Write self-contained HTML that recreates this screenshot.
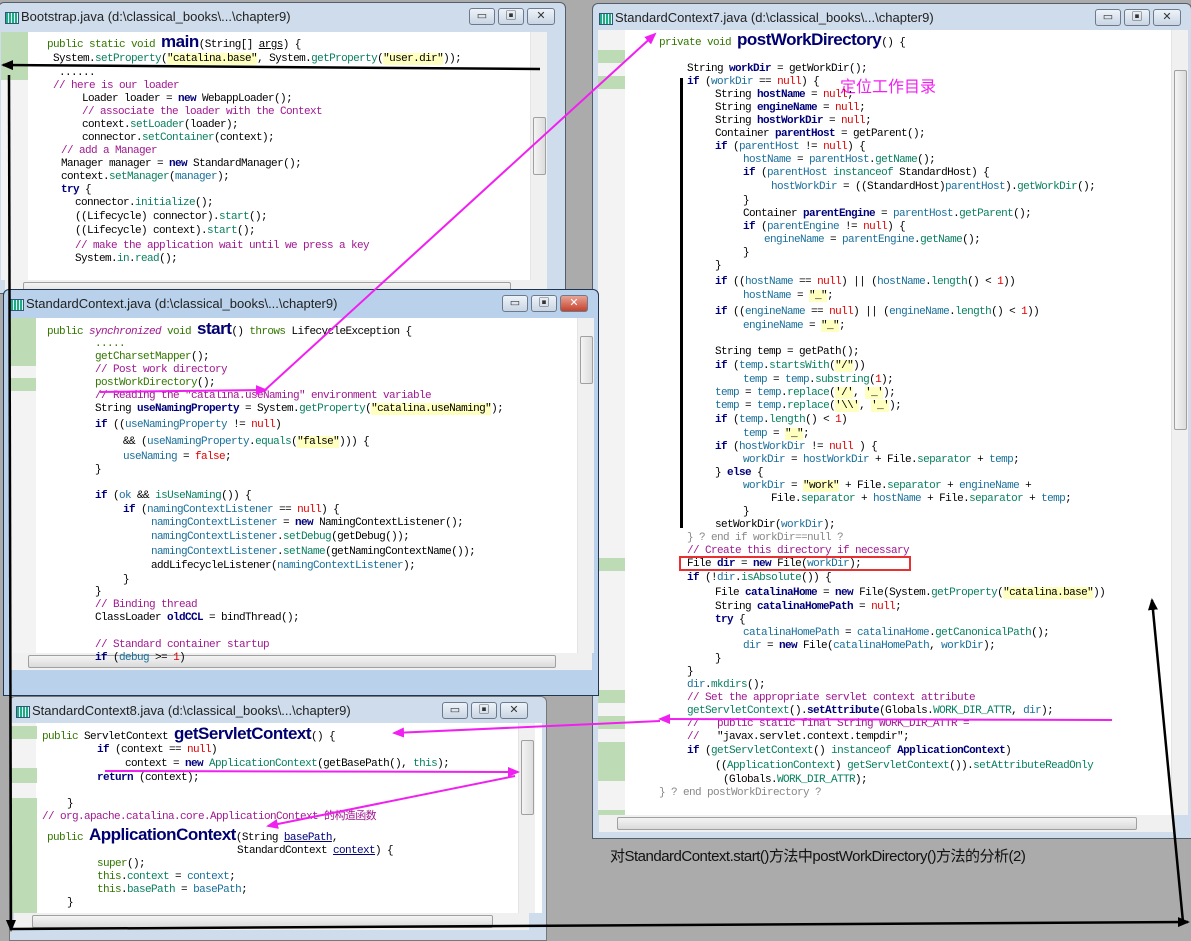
<!DOCTYPE html>
<html><head><meta charset="utf-8">
<style>
*{margin:0;padding:0;box-sizing:border-box}
body{width:1191px;height:935px;background:#ababab;position:relative;overflow:hidden;font-family:"Liberation Sans","Noto Sans CJK SC",sans-serif}
.win{position:absolute;background:#cfdcec;border:1px solid #555d6a;border-radius:6px 6px 0 0}
.title{position:absolute;left:22px;top:6px;font-size:13px;color:#222;white-space:nowrap}
.ico{position:absolute;left:6px;top:9px;width:14px;height:12px;background:repeating-linear-gradient(90deg,#2a8 0 2px,#dfe 2px 3px);border:1px solid #357}
.btns{position:absolute;top:5px;right:10px;display:flex;gap:3px}
.btns div{width:26px;height:17px;border:1px solid #6d7a8c;border-radius:3px;background:linear-gradient(#eef3f9,#c9d5e4);font-size:11px;text-align:center;line-height:15px;color:#333}
.btns .x{width:28px}
.act .btns .x{background:linear-gradient(#e8a394,#c5422c);color:#fff}
.body{position:absolute;background:#fff;overflow:hidden}
.gut{position:absolute;left:0;top:0;bottom:0;width:27px;background:#f3f3f3}
.g{position:absolute;left:0;width:27px;background:#bddcb6}
.vs{position:absolute;top:0;right:0;width:17px;bottom:0;background:#f0f0f0;border-left:1px solid #e4e4e4}
.th{position:absolute;left:2px;width:13px;background:linear-gradient(90deg,#f4f4f4,#dcdcdc);border:1px solid #a0a0a0;border-radius:2px}
.hs{position:absolute;left:0;right:0;height:17px;background:#f0f0f0}
.hs i{position:absolute;left:18px;right:36px;top:2px;height:13px;border:1px solid #a0a0a0;border-radius:2px;background:linear-gradient(#f4f4f4,#dadada)}
.l{position:absolute;white-space:pre;font-family:"Liberation Mono","Noto Sans CJK SC",monospace;font-size:11px;letter-spacing:-0.6px;line-height:13px;color:#000}
.k{color:#00007a;font-weight:bold}
.c{color:#a01890}
.m{color:#0a8060}
.n{color:#e00000}
.s{background:#ffffc0}
.p{color:#337700}
.v{color:#1a6f9a}
.big{font-size:17px;font-weight:bold;color:#000070;letter-spacing:-0.5px;font-family:"Liberation Sans",sans-serif}
</style></head><body>

<!-- Bootstrap window -->
<div class="win" style="left:-2px;top:2px;width:568px;height:292px">
 <div class="ico"></div><div class="title">Bootstrap.java (d:\classical_books\...\chapter9)</div>
 <div class="btns"><div>▭</div><div>▣</div><div class="x">✕</div></div>
 <div class="body" style="left:2px;top:29px;width:546px;height:248px">
  <div class="gut"></div><div class="g" style="top:0;height:48px"></div>
  <div class="vs"><div class="th" style="top:85px;height:58px"></div></div>
 </div>
 <div class="hs" style="top:277px;left:6px;right:18px"><i></i></div>
</div>
<div class="l" style="left:47px;top:35px"><span class="p">public static void </span><span class="big">main</span>(String[] <u>args</u>) {</div>
<div class="l" style="left:53px;top:53px">System.<span class="m">setProperty</span>(<span class="s">"catalina.base"</span>, System.<span class="m">getProperty</span>(<span class="s">"user.dir"</span>));</div>
<div class="l" style="left:53px;top:67px"> ......</div>
<div class="l" style="left:53px;top:80px"><span class="c">// here is our loader</span></div>
<div class="l" style="left:82px;top:93px">Loader loader = <span class="k">new</span> WebappLoader();</div>
<div class="l" style="left:82px;top:106px"><span class="c">// associate the loader with the Context</span></div>
<div class="l" style="left:82px;top:119px">context.<span class="m">setLoader</span>(loader);</div>
<div class="l" style="left:82px;top:132px">connector.<span class="m">setContainer</span>(context);</div>
<div class="l" style="left:61px;top:145px"><span class="c">// add a Manager</span></div>
<div class="l" style="left:61px;top:158px">Manager manager = <span class="k">new</span> StandardManager();</div>
<div class="l" style="left:61px;top:171px">context.<span class="m">setManager</span>(<span class="v">manager</span>);</div>
<div class="l" style="left:61px;top:184px"><span class="k">try</span> {</div>
<div class="l" style="left:75px;top:197px">connector.<span class="m">initialize</span>();</div>
<div class="l" style="left:75px;top:211px">((Lifecycle) connector).<span class="m">start</span>();</div>
<div class="l" style="left:75px;top:225px">((Lifecycle) context).<span class="m">start</span>();</div>
<div class="l" style="left:75px;top:240px"><span class="c">// make the application wait until we press a key</span></div>
<div class="l" style="left:75px;top:253px">System.<span class="m">in</span>.<span class="m">read</span>();</div>

<!-- StandardContext7 window -->
<div class="win" style="left:592px;top:3px;width:600px;height:836px">
 <div class="ico"></div><div class="title">StandardContext7.java (d:\classical_books\...\chapter9)</div>
 <div class="btns"><div>▭</div><div>▣</div><div class="x">✕</div></div>
 <div class="body" style="left:5px;top:26px;width:590px;height:785px">
  <div class="gut"></div>
  <div class="g" style="top:20px;height:13px"></div><div class="g" style="top:46px;height:13px"></div>
  <div class="g" style="top:528px;height:13px"></div><div class="g" style="top:660px;height:13px"></div>
  <div class="g" style="top:686px;height:13px"></div><div class="g" style="top:712px;height:39px"></div>
  <div class="g" style="top:780px;height:13px"></div>
  <div class="vs"><div class="th" style="top:40px;height:360px"></div></div>
 </div>
 <div class="hs" style="top:811px;left:6px;right:18px"><i></i></div>
</div>
<div style="position:absolute;left:680px;top:78px;width:3px;height:450px;background:#000"></div>
<div style="position:absolute;left:679px;top:556px;width:232px;height:15px;border:2px solid #e83030"></div>
<div class="l" style="left:659px;top:33px"><span class="p">private void </span><span class="big">postWorkDirectory</span>() {</div>
<div class="l" style="left:687px;top:63px">String <span class="k">workDir</span> = getWorkDir();</div>
<div class="l" style="left:687px;top:76px"><span class="k">if</span> (<span class="v">workDir</span> == <span class="n">null</span>) {</div>
<div style="position:absolute;left:840px;top:73px;font-size:16px;color:#f020f0;font-family:'Noto Sans CJK SC',sans-serif">定位工作目录</div>
<div class="l" style="left:715px;top:89px">String <span class="k">hostName</span> = <span class="n">null</span>;</div>
<div class="l" style="left:715px;top:102px">String <span class="k">engineName</span> = <span class="n">null</span>;</div>
<div class="l" style="left:715px;top:115px">String <span class="k">hostWorkDir</span> = <span class="n">null</span>;</div>
<div class="l" style="left:715px;top:128px">Container <span class="k">parentHost</span> = getParent();</div>
<div class="l" style="left:715px;top:141px"><span class="k">if</span> (<span class="v">parentHost</span> != <span class="n">null</span>) {</div>
<div class="l" style="left:743px;top:154px"><span class="v">hostName</span> = <span class="v">parentHost</span>.<span class="m">getName</span>();</div>
<div class="l" style="left:743px;top:167px"><span class="k">if</span> (<span class="v">parentHost</span> <span class="m">instanceof</span> StandardHost) {</div>
<div class="l" style="left:771px;top:181px"><span class="v">hostWorkDir</span> = ((StandardHost)<span class="v">parentHost</span>).<span class="m">getWorkDir</span>();</div>
<div class="l" style="left:743px;top:195px">}</div>
<div class="l" style="left:743px;top:208px">Container <span class="k">parentEngine</span> = <span class="v">parentHost</span>.<span class="m">getParent</span>();</div>
<div class="l" style="left:743px;top:221px"><span class="k">if</span> (<span class="v">parentEngine</span> != <span class="n">null</span>) {</div>
<div class="l" style="left:764px;top:234px"><span class="v">engineName</span> = <span class="v">parentEngine</span>.<span class="m">getName</span>();</div>
<div class="l" style="left:743px;top:247px">}</div>
<div class="l" style="left:715px;top:260px">}</div>
<div class="l" style="left:715px;top:276px"><span class="k">if</span> ((<span class="v">hostName</span> == <span class="n">null</span>) || (<span class="v">hostName</span>.<span class="m">length</span>() &lt; <span class="n">1</span>))</div>
<div class="l" style="left:743px;top:290px"><span class="v">hostName</span> = <span class="s">"_"</span>;</div>
<div class="l" style="left:715px;top:306px"><span class="k">if</span> ((<span class="v">engineName</span> == <span class="n">null</span>) || (<span class="v">engineName</span>.<span class="m">length</span>() &lt; <span class="n">1</span>))</div>
<div class="l" style="left:743px;top:320px"><span class="v">engineName</span> = <span class="s">"_"</span>;</div>
<div class="l" style="left:715px;top:346px">String temp = getPath();</div>
<div class="l" style="left:715px;top:360px"><span class="k">if</span> (<span class="v">temp</span>.<span class="m">startsWith</span>(<span class="s">"/"</span>))</div>
<div class="l" style="left:743px;top:374px"><span class="v">temp</span> = <span class="v">temp</span>.<span class="m">substring</span>(<span class="n">1</span>);</div>
<div class="l" style="left:715px;top:387px"><span class="v">temp</span> = <span class="v">temp</span>.<span class="m">replace</span>(<span class="s">'/'</span>, <span class="s">'_'</span>);</div>
<div class="l" style="left:715px;top:400px"><span class="v">temp</span> = <span class="v">temp</span>.<span class="m">replace</span>(<span class="s">'\\'</span>, <span class="s">'_'</span>);</div>
<div class="l" style="left:715px;top:414px"><span class="k">if</span> (<span class="v">temp</span>.<span class="m">length</span>() &lt; <span class="n">1</span>)</div>
<div class="l" style="left:743px;top:428px"><span class="v">temp</span> = <span class="s">"_"</span>;</div>
<div class="l" style="left:715px;top:441px"><span class="k">if</span> (<span class="v">hostWorkDir</span> != <span class="n">null</span> ) {</div>
<div class="l" style="left:743px;top:454px"><span class="v">workDir</span> = <span class="v">hostWorkDir</span> + File.<span class="m">separator</span> + <span class="v">temp</span>;</div>
<div class="l" style="left:715px;top:467px">} <span class="k">else</span> {</div>
<div class="l" style="left:743px;top:480px"><span class="v">workDir</span> = <span class="s">"work"</span> + File.<span class="m">separator</span> + <span class="v">engineName</span> +</div>
<div class="l" style="left:771px;top:493px">File.<span class="m">separator</span> + <span class="v">hostName</span> + File.<span class="m">separator</span> + <span class="v">temp</span>;</div>
<div class="l" style="left:743px;top:506px">}</div>
<div class="l" style="left:715px;top:519px">setWorkDir(<span class="v">workDir</span>);</div>
<div class="l" style="left:687px;top:532px;color:#888">} ? end if workDir==null ?</div>
<div class="l" style="left:687px;top:545px"><span class="c">// Create this directory if necessary</span></div>
<div class="l" style="left:687px;top:558px">File <span class="k">dir</span> = <span class="k">new</span> File(<span class="v">workDir</span>);</div>
<div class="l" style="left:687px;top:572px"><span class="k">if</span> (!<span class="v">dir</span>.<span class="m">isAbsolute</span>()) {</div>
<div class="l" style="left:715px;top:587px">File <span class="k">catalinaHome</span> = <span class="k">new</span> File(System.<span class="m">getProperty</span>(<span class="s">"catalina.base"</span>))</div>
<div class="l" style="left:715px;top:601px">String <span class="k">catalinaHomePath</span> = <span class="n">null</span>;</div>
<div class="l" style="left:715px;top:614px"><span class="k">try</span> {</div>
<div class="l" style="left:743px;top:627px"><span class="v">catalinaHomePath</span> = <span class="v">catalinaHome</span>.<span class="m">getCanonicalPath</span>();</div>
<div class="l" style="left:743px;top:640px"><span class="v">dir</span> = <span class="k">new</span> File(<span class="v">catalinaHomePath</span>, <span class="v">workDir</span>);</div>
<div class="l" style="left:715px;top:653px">}</div>
<div class="l" style="left:687px;top:666px">}</div>
<div class="l" style="left:687px;top:679px"><span class="v">dir</span>.<span class="m">mkdirs</span>();</div>
<div class="l" style="left:687px;top:692px"><span class="c">// Set the appropriate servlet context attribute</span></div>
<div class="l" style="left:687px;top:705px"><span class="m">getServletContext</span>().<span class="k">setAttribute</span>(Globals.<span class="m">WORK_DIR_ATTR</span>, <span class="v">dir</span>);</div>
<div class="l" style="left:687px;top:718px"><span class="c">//   public static final String WORK_DIR_ATTR =</span></div>
<div class="l" style="left:687px;top:731px"><span class="c">//   </span>"javax.servlet.context.tempdir";</div>
<div class="l" style="left:687px;top:745px"><span class="k">if</span> (<span class="m">getServletContext</span>() <span class="m">instanceof</span> <span class="k">ApplicationContext</span>)</div>
<div class="l" style="left:715px;top:760px">((<span class="m">ApplicationContext</span>) <span class="m">getServletContext</span>()).<span class="m">setAttributeReadOnly</span></div>
<div class="l" style="left:723px;top:774px">(Globals.<span class="m">WORK_DIR_ATTR</span>);</div>
<div class="l" style="left:659px;top:787px;color:#888">} ? end postWorkDirectory ?</div>

<div style="position:absolute;left:610px;top:845px;font-size:15px;color:#111;font-family:'Liberation Sans','Noto Sans CJK SC',sans-serif;letter-spacing:-0.5px">对StandardContext.start()方法中postWorkDirectory()方法的分析(2)</div>

<!-- StandardContext window -->
<div class="win act" style="left:3px;top:289px;width:596px;height:407px;background:#b9d1ea;border-color:#1f3550">
 <div class="ico"></div><div class="title">StandardContext.java (d:\classical_books\...\chapter9)</div>
 <div class="btns"><div>▭</div><div>▣</div><div class="x">✕</div></div>
 <div class="body" style="left:5px;top:28px;width:585px;height:335px">
  <div class="gut"></div><div class="g" style="top:0;height:48px"></div><div class="g" style="top:60px;height:13px"></div>
  <div class="vs"><div class="th" style="top:18px;height:48px"></div></div>
 </div>
 <div class="hs" style="top:363px;left:6px;right:6px"><i></i></div>
</div>
<div class="l" style="left:47px;top:322px"><span class="p">public </span><i class="c">synchronized</i><span class="p"> void </span><span class="big">start</span>() <span class="p">throws</span> LifecycleException {</div>
<div class="l" style="left:95px;top:338px"><span class="p">.....</span></div>
<div class="l" style="left:95px;top:351px"><span class="p">getCharsetMapper</span>();</div>
<div class="l" style="left:95px;top:364px"><span class="c">// Post work directory</span></div>
<div class="l" style="left:95px;top:377px"><span class="p">postWorkDirectory</span>();</div>
<div class="l" style="left:95px;top:390px"><span class="c">// Reading the "catalina.useNaming" environment variable</span></div>
<div class="l" style="left:95px;top:403px">String <span class="k">useNamingProperty</span> = System.<span class="m">getProperty</span>(<span class="s">"catalina.useNaming"</span>);</div>
<div class="l" style="left:95px;top:419px"><span class="k">if</span> ((<span class="v">useNamingProperty</span> != <span class="n">null</span>)</div>
<div class="l" style="left:123px;top:436px">&amp;&amp; (<span class="v">useNamingProperty</span>.<span class="m">equals</span>(<span class="s">"false"</span>))) {</div>
<div class="l" style="left:123px;top:451px"><span class="v">useNaming</span> = <span class="n">false</span>;</div>
<div class="l" style="left:95px;top:464px">}</div>
<div class="l" style="left:95px;top:490px"><span class="k">if</span> (<span class="v">ok</span> &amp;&amp; <span class="m">isUseNaming</span>()) {</div>
<div class="l" style="left:123px;top:504px"><span class="k">if</span> (<span class="v">namingContextListener</span> == <span class="n">null</span>) {</div>
<div class="l" style="left:151px;top:517px"><span class="v">namingContextListener</span> = <span class="k">new</span> NamingContextListener();</div>
<div class="l" style="left:151px;top:531px"><span class="v">namingContextListener</span>.<span class="m">setDebug</span>(getDebug());</div>
<div class="l" style="left:151px;top:546px"><span class="v">namingContextListener</span>.<span class="m">setName</span>(getNamingContextName());</div>
<div class="l" style="left:151px;top:560px">addLifecycleListener(<span class="v">namingContextListener</span>);</div>
<div class="l" style="left:123px;top:574px">}</div>
<div class="l" style="left:95px;top:586px">}</div>
<div class="l" style="left:95px;top:599px"><span class="c">// Binding thread</span></div>
<div class="l" style="left:95px;top:612px">ClassLoader <span class="k">oldCCL</span> = bindThread();</div>
<div class="l" style="left:95px;top:639px"><span class="c">// Standard container startup</span></div>
<div class="l" style="left:95px;top:652px"><span class="k">if</span> (<span class="v">debug</span> &gt;= <span class="n">1</span>)</div>

<!-- StandardContext8 window -->
<div class="win" style="left:9px;top:696px;width:538px;height:245px;border-color:#777">
 <div class="ico"></div><div class="title">StandardContext8.java (d:\classical_books\...\chapter9)</div>
 <div class="btns" style="right:18px"><div>▭</div><div>▣</div><div class="x">✕</div></div>
</div>
<div class="body" style="left:10px;top:723px;width:532px;height:190px">
 <div class="gut" style="width:26px;background:#f3f3f3"></div>
 <div class="g" style="top:3px;height:13px;left:0"></div>
 <div class="g" style="top:45px;height:15px"></div><div class="g" style="top:75px;height:115px"></div>
 <div class="vs" style="right:7px"><div class="th" style="top:17px;height:75px"></div></div>
</div>
<div class="hs" style="top:913px;left:14px;width:515px;position:absolute"><i></i></div>
<div class="l" style="left:42px;top:727px"><span class="p">public </span>ServletContext <span class="big">getServletContext</span>() {</div>
<div class="l" style="left:97px;top:744px"><span class="k">if</span> (context == <span class="n">null</span>)</div>
<div class="l" style="left:125px;top:758px">context = <span class="k">new</span> <span class="m">ApplicationContext</span>(getBasePath(), <span class="m">this</span>);</div>
<div class="l" style="left:97px;top:772px"><span class="k">return</span> (context);</div>
<div class="l" style="left:67px;top:798px">}</div>
<div class="l" style="left:42px;top:811px"><span class="c">// org.apache.catalina.core.ApplicationContext 的构造函数</span></div>
<div class="l" style="left:47px;top:828px"><span class="p">public </span><span class="big">ApplicationContext</span>(String <u class="k" style="font-weight:normal">basePath</u>,</div>
<div class="l" style="left:237px;top:845px">StandardContext <u style="color:#00007a">context</u>) {</div>
<div class="l" style="left:97px;top:858px"><span class="p">super</span>();</div>
<div class="l" style="left:97px;top:871px"><span class="p">this</span>.<span class="m">context</span> = <span class="v">context</span>;</div>
<div class="l" style="left:97px;top:884px"><span class="p">this</span>.<span class="m">basePath</span> = <span class="v">basePath</span>;</div>
<div class="l" style="left:67px;top:897px">}</div>

<!-- arrows overlay -->
<svg style="position:absolute;left:0;top:0" width="1191" height="935">
 <defs>
  <marker id="bk" markerUnits="userSpaceOnUse" markerWidth="12" markerHeight="10" refX="10" refY="5" orient="auto"><path d="M0,0 L12,5 L0,10 z" fill="#000"/></marker>
  <marker id="mg" markerUnits="userSpaceOnUse" markerWidth="12" markerHeight="10" refX="10" refY="5" orient="auto"><path d="M0,0 L12,5 L0,10 z" fill="#f020f0"/></marker>
 </defs>
 <g stroke="#000" stroke-width="2.5" fill="none">
  <line x1="540" y1="69" x2="3" y2="65" marker-end="url(#bk)"/>
  <line x1="9" y1="75" x2="11" y2="930" marker-end="url(#bk)"/>
  <line x1="12" y1="929" x2="1188" y2="922" marker-end="url(#bk)"/>
  <line x1="1183" y1="922" x2="1152" y2="600" marker-end="url(#bk)"/>
 </g>
 <g stroke="#f020f0" stroke-width="2" fill="none">
  <line x1="100" y1="392" x2="266" y2="390" marker-end="url(#mg)"/>
  <line x1="265" y1="390" x2="655" y2="34" marker-end="url(#mg)"/>
  <line x1="1112" y1="720" x2="660" y2="719" marker-end="url(#mg)"/>
  <line x1="660" y1="721" x2="394" y2="733" marker-end="url(#mg)"/>
  <line x1="105" y1="771" x2="518" y2="772" marker-end="url(#mg)"/>
  <line x1="515" y1="776" x2="268" y2="826" marker-end="url(#mg)"/>
 </g>
</svg>
</body></html>
